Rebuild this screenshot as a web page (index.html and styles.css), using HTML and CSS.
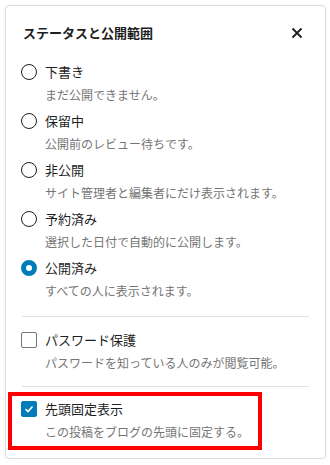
FILE: index.html
```html
<!DOCTYPE html>
<html lang="ja">
<head>
<meta charset="utf-8">
<link rel="stylesheet" href="styles.css">
</head>
<body>
<div class="panel">
  <div class="header">
    <h2 class="title">ステータスと公開範囲</h2>
    <button class="close" aria-label="閉じる">
      <svg width="12" height="12" viewBox="0 0 12 12"><path d="M1.5 1.5 L10.5 10.5 M10.5 1.5 L1.5 10.5" stroke="#1e1e1e" stroke-width="1.8" fill="none"/></svg>
    </button>
  </div>
  <div class="group">
    <div class="item">
      <span class="radio"></span>
      <span class="label">下書き</span>
      <span class="desc">まだ公開できません。</span>
    </div>
    <div class="item">
      <span class="radio"></span>
      <span class="label">保留中</span>
      <span class="desc">公開前のレビュー待ちです。</span>
    </div>
    <div class="item">
      <span class="radio"></span>
      <span class="label">非公開</span>
      <span class="desc">サイト管理者と編集者にだけ表示されます。</span>
    </div>
    <div class="item">
      <span class="radio"></span>
      <span class="label">予約済み</span>
      <span class="desc">選択した日付で自動的に公開します。</span>
    </div>
    <div class="item">
      <span class="radio checked"></span>
      <span class="label">公開済み</span>
      <span class="desc">すべての人に表示されます。</span>
    </div>
  </div>
  <hr class="divider first">
  <div class="item">
    <span class="checkbox"></span>
    <span class="label">パスワード保護</span>
    <span class="desc">パスワードを知っている人のみが閲覧可能。</span>
  </div>
  <hr class="divider second">
  <div class="item sticky">
    <span class="checkbox checked">
      <svg width="12" height="12" viewBox="0 0 12 12"><path d="M2.5 6.2 L5 8.5 L9.5 3.5" stroke="#fff" stroke-width="1.6" fill="none"/></svg>
    </span>
    <span class="label">先頭固定表示</span>
    <span class="desc">この投稿をブログの先頭に固定する。</span>
    <div class="highlight"></div>
  </div>
</div>
</body>
</html>
```
FILE: styles.css
```css
* { box-sizing: border-box; }
html, body { margin: 0; padding: 0; background: #fff; }
body {
  font-family: "Noto Sans CJK JP", "Noto Sans", sans-serif;
  color: #1e1e1e;
}
.panel {
  margin: 5px 0 0 5px;
  width: 321px;
  height: 454px;
  border: 1px solid #dcdcde;
  border-radius: 4px;
  box-shadow: 0 1px 3px rgba(0,0,0,0.08);
  padding: 17px 16px 0 16px;
  position: relative;
}
.header {
  display: flex;
  align-items: center;
  justify-content: space-between;
  height: 20px;
}
.title {
  margin: 0 0 0 1px;
  font-size: 13px;
  font-weight: 700;
  line-height: 20px;
}
.close {
  border: 0;
  background: none;
  padding: 0;
  width: 24px;
  height: 24px;
  display: flex;
  align-items: center;
  justify-content: center;
  margin-right: 0;
}
.group {
  margin-top: 19px;
  display: flex;
  flex-direction: column;
  gap: 8px;
}
.item {
  display: grid;
  grid-template-columns: 16px 1fr;
  column-gap: 8px;
  row-gap: 5px;
  align-items: center;
  position: relative;
  padding-left: 0;
  margin-left: -1px;
}
.label {
  font-size: 13px;
  line-height: 20px;
}
.desc {
  grid-column: 2;
  font-size: 12px;
  line-height: 16px;
  color: #757575;
}
.radio {
  width: 16px;
  height: 16px;
  border: 1.5px solid #1e1e1e;
  border-radius: 50%;
  display: block;
}
.radio.checked {
  border: 5px solid #007cba;
  background: #fff;
}
.checkbox {
  width: 16px;
  height: 16px;
  border: 1px solid #757575;
  border-radius: 2px;
  display: flex;
  align-items: center;
  justify-content: center;
}
.checkbox.checked {
  background: #007cba;
  border-color: #007cba;
}
.divider {
  border: 0;
  border-top: 1px solid #e0e0e0;
  margin: 0;
}
.divider.first { margin-top: 17px; margin-bottom: 13px; }
.divider.second { margin-top: 15px; margin-bottom: 12px; }
.highlight {
  position: absolute;
  left: -13px;
  top: -7px;
  width: 254px;
  height: 58px;
  border: 4px solid #f00;
  pointer-events: none;
}
```
